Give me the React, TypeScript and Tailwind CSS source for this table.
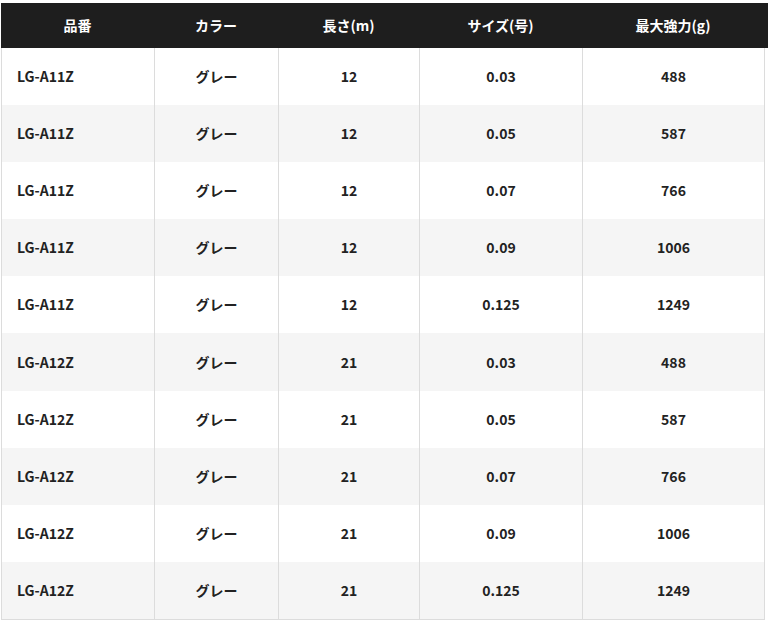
import React from 'react';

const rows = [
  ['LG-A11Z', 'グレー', '12', '0.03', '488'],
  ['LG-A11Z', 'グレー', '12', '0.05', '587'],
  ['LG-A11Z', 'グレー', '12', '0.07', '766'],
  ['LG-A11Z', 'グレー', '12', '0.09', '1006'],
  ['LG-A11Z', 'グレー', '12', '0.125', '1249'],
  ['LG-A12Z', 'グレー', '21', '0.03', '488'],
  ['LG-A12Z', 'グレー', '21', '0.05', '587'],
  ['LG-A12Z', 'グレー', '21', '0.07', '766'],
  ['LG-A12Z', 'グレー', '21', '0.09', '1006'],
  ['LG-A12Z', 'グレー', '21', '0.125', '1249'],
];

const heads = ['品番', 'カラー', '長さ(m)', 'サイズ(号)', '最大強力(g)'];
const cols = 'grid grid-cols-[153px_124px_141px_163px_182px]';

export default function App() {
  return (
    <div
      className="w-[768px] h-[637px] bg-white pt-[3px] pl-[1px] overflow-hidden text-[14px] font-bold text-[#222]"
      style={{ fontFamily: '"Noto Sans CJK JP", "Noto Sans", sans-serif' }}
    >
      <div className="bg-[#1e1e1e] h-[45px] text-white">
        <div className={`${cols} h-full`}>
          {heads.map(h => (
            <div key={h} className="flex items-center justify-center">{h}</div>
          ))}
        </div>
      </div>
      <div className="w-[764px] border-l border-b border-[#dcdcdc]">
        {rows.map((r, i) => (
          <div key={i} className={`${cols} h-[57.1px] ${i % 2 === 1 ? 'bg-[#f5f5f5]' : 'bg-white'}`}>
            {r.map((c, j) => (
              <div
                key={j}
                className={`flex items-center border-r border-[#dcdcdc] ${j === 0 ? 'pl-[15px]' : 'justify-center'}`}
              >
                {c}
              </div>
            ))}
          </div>
        ))}
      </div>
    </div>
  );
}
